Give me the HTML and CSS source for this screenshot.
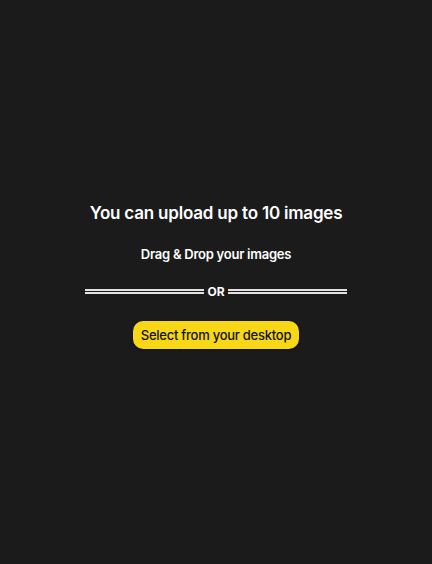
FILE: index.html
```html
<!DOCTYPE html>
<html lang="en">
<head>
<meta charset="utf-8">
<title>Upload images</title>
<link rel="stylesheet" href="styles.css">
</head>
<body>
<main class="upload">
  <h1 class="upload-title">You can upload up to 10 images</h1>
  <p class="upload-drag">Drag &amp; Drop your images</p>
  <div class="divider">
    <span class="divider-line"></span>
    <span class="divider-text">OR</span>
    <span class="divider-line"></span>
  </div>
  <button class="select-btn" type="button">Select from your desktop</button>
</main>
</body>
</html>
```
FILE: styles.css
```css
html, body {
  margin: 0;
  padding: 0;
  background: #1b1b1b;
}
body {
  font-family: Inter, "Noto Sans", sans-serif;
  color: #ffffff;
}
.upload {
  min-height: 564px;
  display: flex;
  flex-direction: column;
  align-items: center;
  justify-content: center;
  padding-bottom: 15px;
  box-sizing: border-box;
}
.upload-title {
  margin: 0;
  font-size: 17px;
  font-weight: 600;
  letter-spacing: -0.2px;
  line-height: 24px;
}
.upload-drag {
  margin: 20px 0 0;
  font-size: 13px;
  font-weight: 600;
  letter-spacing: -0.25px;
  line-height: 18px;
}
.divider {
  margin-top: 21px;
  display: flex;
  align-items: center;
  gap: 3px;
  width: 262px;
}
.divider-line {
  flex: 1;
  height: 0;
  border-top: 5px double #e2e2e2;
}
.divider-text {
  font-size: 12px;
  font-weight: 700;
  line-height: 16px;
}
.select-btn {
  margin-top: 21px;
  background: #f7d716;
  color: #111;
  border: none;
  border-radius: 10px;
  padding: 0 8px;
  height: 28px;
  font-family: inherit;
  font-size: 13px;
  font-weight: 500;
  letter-spacing: -0.25px;
  box-shadow: 0 1px 3px rgba(0,0,0,0.5);
}
```
